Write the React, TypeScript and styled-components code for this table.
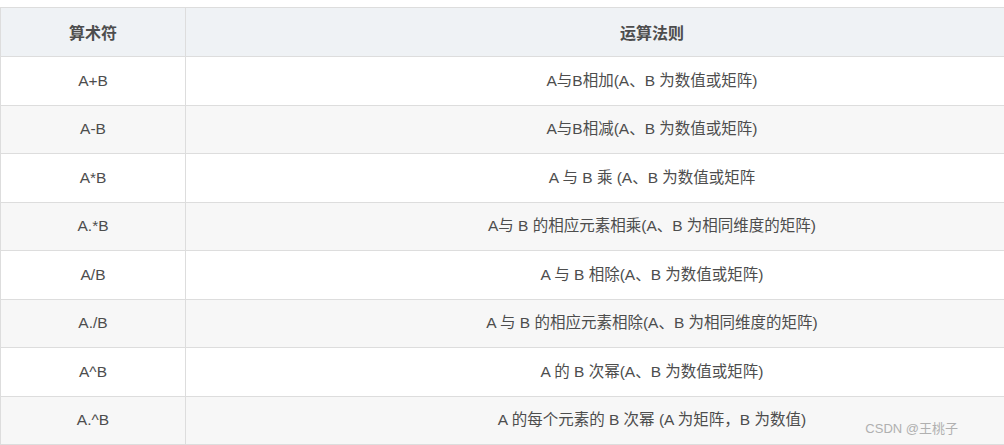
import React from "react"
import styled, { createGlobalStyle } from "styled-components"

const GlobalStyle = createGlobalStyle`
  html, body {
    margin: 0;
    padding: 0;
    background: #fff;
    overflow: hidden;
  }
  body {
    padding-top: 7px;
    font-family: "Liberation Sans", "Noto Sans CJK SC", sans-serif;
  }
`

// the table runs past the right edge of the window, as in the screenshot
const Wrap = styled.div`
  position: relative;
  width: 1004px;
  height: 438px;
  overflow: hidden;
`

const Table = styled.table`
  width: 1119px;
  border-collapse: collapse;
  table-layout: fixed;
  color: #4d4d4d;
  font-size: 15.5px;
`

const HeadCell = styled.th<{ $w?: number }>`
  width: ${({ $w }) => ($w ? `${$w}px` : "auto")};
  height: 48px;
  padding: 0;
  background: #eff2f5;
  border: 1px solid #dddddd;
  font-weight: bold;
  font-size: 16px;
  text-align: center;
`

const Row = styled.tr<{ $striped: boolean }>`
  height: 48.5px;
  background: ${({ $striped }) => ($striped ? "#f7f7f7" : "#ffffff")};
`

const Cell = styled.td`
  padding: 0;
  border: 1px solid #dddddd;
  text-align: center;
  vertical-align: middle;
  line-height: 20px;
`

const Watermark = styled.span`
  position: absolute;
  right: 46px;
  bottom: 8px;
  color: #b0b0b0;
  font-size: 13px;
`

const rows: [string, string][] = [
  ["A+B", "A与B相加(A、B 为数值或矩阵)"],
  ["A-B", "A与B相减(A、B 为数值或矩阵)"],
  ["A*B", "A 与 B 乘 (A、B 为数值或矩阵"],
  ["A.*B", "A与 B 的相应元素相乘(A、B 为相同维度的矩阵)"],
  ["A/B", "A 与 B 相除(A、B 为数值或矩阵)"],
  ["A./B", "A 与 B 的相应元素相除(A、B 为相同维度的矩阵)"],
  ["A^B", "A 的 B 次幂(A、B 为数值或矩阵)"],
  ["A.^B", "A 的每个元素的 B 次幂 (A 为矩阵，B 为数值)"],
]

const App: React.FC = () => (
  <>
    <GlobalStyle />
    <Wrap>
      <Table>
        <thead>
          <tr>
            <HeadCell $w={184}>算术符</HeadCell>
            <HeadCell>运算法则</HeadCell>
          </tr>
        </thead>
        <tbody>
          {rows.map(([op, rule], i) => (
            <Row key={op} $striped={i % 2 === 1}>
              <Cell>{op}</Cell>
              <Cell>{rule}</Cell>
            </Row>
          ))}
        </tbody>
      </Table>
      <Watermark>CSDN @王桃子</Watermark>
    </Wrap>
  </>
)

export default App
